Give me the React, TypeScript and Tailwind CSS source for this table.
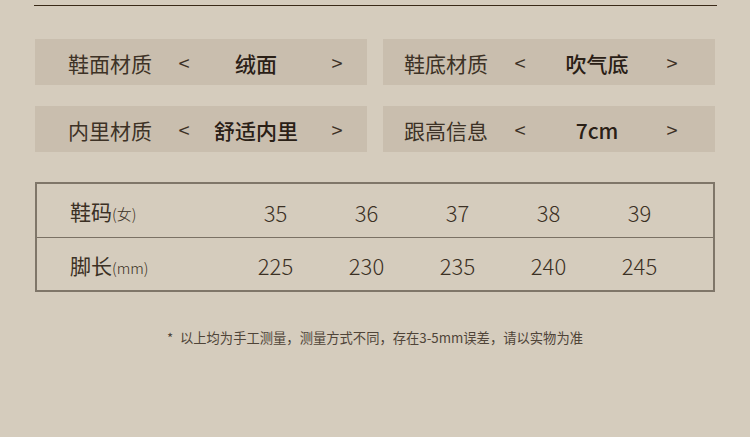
import React from "react";

const font = { fontFamily: '"Noto Sans CJK SC", "Noto Sans", sans-serif' };

function InfoBox({ label, value, right }: { label: string; value: string; right?: boolean }) {
  return (
    <div
      className={
        "flex h-[46px] items-center bg-[#c9beae] pt-[2px] text-[21px] leading-none text-[#3d3226] " +
        (right ? "pl-[21px]" : "pl-[33px]")
      }
    >
      <span className="w-[110px]">{label}</span>
      <span className="w-[12px] text-center text-[20px]">&lt;</span>
      <span className={"text-center font-medium text-[#2a2016] " + (right ? "w-[142px]" : "w-[132px]")}>{value}</span>
      <span className={"w-[12px] text-center text-[20px] " + (right ? "ml-[-2px]" : "ml-[9px]")}>&gt;</span>
    </div>
  );
}

export default function App() {
  const sizes = ["35", "36", "37", "38", "39"];
  const lengths = ["225", "230", "235", "240", "245"];
  return (
    <div className="h-[437px] w-[750px] bg-[#d5ccbd] pt-[5px]" style={font}>
      <div className="ml-[34px] h-[1px] w-[683px] bg-[#3a2a18]" />
      <div className="ml-[35px] mt-[33px] grid w-[680px] grid-cols-2 gap-x-[16px] gap-y-[21px]">
        <InfoBox label="鞋面材质" value="绒面" />
        <InfoBox label="鞋底材质" value="吹气底" right />
        <InfoBox label="内里材质" value="舒适内里" />
        <InfoBox label="跟高信息" value="7cm" right />
      </div>
      <div className="ml-[35px] mt-[30px] w-[680px] border-2 border-[#7f7669] text-[#3b3024]">
        <div className="flex h-[54px] items-center border-b border-[#7a7164] pt-[2px]">
          <div className="w-[193px] pl-[33px] text-[21px] leading-none">
            鞋码<span className="text-[15px] font-light">(女)</span>
          </div>
          {sizes.map((s) => (
            <div key={s} className="w-[91px] text-center text-[22px] font-light leading-none">
              {s}
            </div>
          ))}
        </div>
        <div className="flex h-[52px] items-center pt-[2px]">
          <div className="w-[193px] pl-[33px] text-[21px] leading-none">
            脚长<span className="text-[15px] font-light">(mm)</span>
          </div>
          {lengths.map((s) => (
            <div key={s} className="w-[91px] text-center text-[22px] font-light leading-none">
              {s}
            </div>
          ))}
        </div>
      </div>
      <div className="mt-[36px] flex justify-center text-[13.3px] leading-[20px] text-[#4f4438]">
        <span className="w-[13px]">*</span>
        <span>以上均为手工测量，测量方式不同，存在3-5mm误差，请以实物为准</span>
      </div>
    </div>
  );
}
